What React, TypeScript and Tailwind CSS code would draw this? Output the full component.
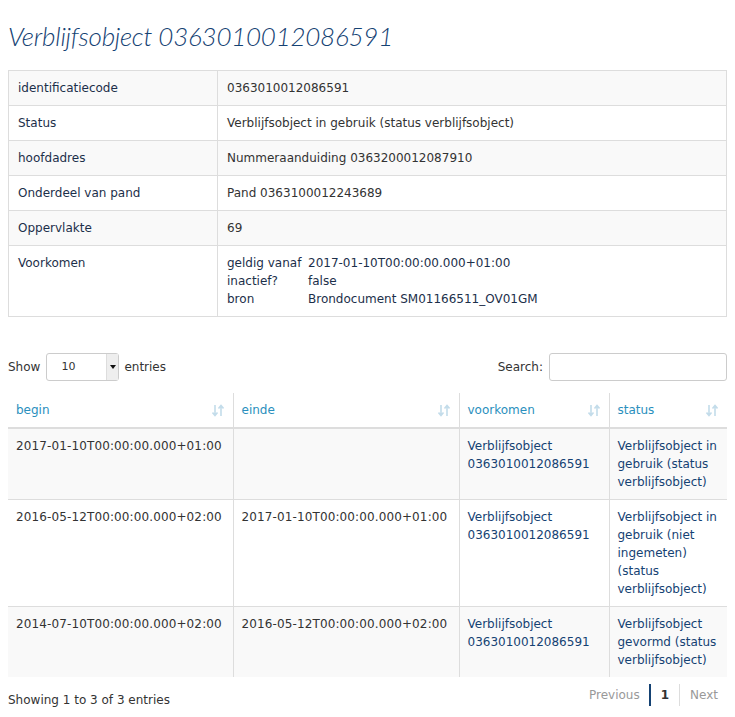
import { FC } from "react";

interface Row {
  begin: string
  einde: string
  voorkomen: string[]
  status: string[]
}

const rows: Row[] = [
  {
    begin: "2017-01-10T00:00:00.000+01:00",
    einde: "",
    voorkomen: ["Verblijfsobject", "0363010012086591"],
    status: ["Verblijfsobject in", "gebruik (status", "verblijfsobject)"],
  },
  {
    begin: "2016-05-12T00:00:00.000+02:00",
    einde: "2017-01-10T00:00:00.000+01:00",
    voorkomen: ["Verblijfsobject", "0363010012086591"],
    status: ["Verblijfsobject in", "gebruik (niet", "ingemeten)", "(status", "verblijfsobject)"],
  },
  {
    begin: "2014-07-10T00:00:00.000+02:00",
    einde: "2016-05-12T00:00:00.000+02:00",
    voorkomen: ["Verblijfsobject", "0363010012086591"],
    status: ["Verblijfsobject", "gevormd (status", "verblijfsobject)"],
  },
];

const props: [string, string][] = [
  ["identificatiecode", "0363010012086591"],
  ["Status", "Verblijfsobject in gebruik (status verblijfsobject)"],
  ["hoofdadres", "Nummeraanduiding 0363200012087910"],
  ["Onderdeel van pand", "Pand 0363100012243689"],
  ["Oppervlakte", "69"],
];

const SortIcon: FC = () => (
  <svg width="12" height="13" viewBox="0 0 12 13" className="text-[#c3dcea]">
    <path d="M3 1v10M0.5 8.5L3 11.5L5.5 8.5" stroke="currentColor" strokeWidth="1.6" fill="none" />
    <path d="M9 12V2M6.5 4.5L9 1.5L11.5 4.5" stroke="currentColor" strokeWidth="1.6" fill="none" />
  </svg>
);

const App: FC = () => {
  return (
    <div className="px-2 pb-2 text-[12px] leading-[18px] text-[#333]" style={{ fontFamily: "'DejaVu Sans', sans-serif" }}>
      <h1 className="pt-[19px] pb-[17px] text-[26px] leading-[34px] italic font-light tracking-[-0.01em] text-[#154273]" style={{ fontFamily: "Lato, sans-serif" }}>
        Verblijfsobject 0363010012086591
      </h1>

      <table className="w-full border-collapse border border-[#ddd]">
        <tbody>
          {props.map(([k, v], i) => (
            <tr key={k} className={i % 2 === 0 ? "bg-[#f9f9f9]" : "bg-white"}>
              <td className="h-[35px] w-[209px] border border-[#ddd] px-[9px] py-[8px] text-[#1c2f4a]">{k}</td>
              <td className="border border-[#ddd] px-[9px] py-[8px]">{v}</td>
            </tr>
          ))}
          <tr className="bg-white">
            <td className="border border-[#ddd] px-[9px] py-[8px] align-top text-[#1c2f4a]">Voorkomen</td>
            <td className="border border-[#ddd] px-[9px] py-[8px]">
              <div className="grid grid-cols-[81px_1fr] text-[#1c2f4a]">
                <span>geldig vanaf</span><span>2017-01-10T00:00:00.000+01:00</span>
                <span>inactief?</span><span>false</span>
                <span>bron</span><span>Brondocument SM01166511_OV01GM</span>
              </div>
            </td>
          </tr>
        </tbody>
      </table>

      <div className="mt-[36px] flex items-center justify-between">
        <div className="flex items-center gap-[5px]">
          <span>Show</span>
          <div className="relative ml-[1px] flex h-[28px] w-[73px] items-center rounded-[3px] border border-[#ccc] bg-white pl-[14px]">
            <span className="text-[11px]">10</span>
            <div className="absolute right-0 top-0 flex h-full w-[12px] items-center justify-center border-l border-[#ddd] bg-[#eee]">
              <div className="h-0 w-0 border-x-[3px] border-t-[4px] border-x-transparent border-t-[#111]" />
            </div>
          </div>
          <span>entries</span>
        </div>
        <div className="flex items-center gap-[6px]">
          <span>Search:</span>
          <div className="h-[28px] w-[178px] rounded-[3px] border border-[#ccc] bg-white" />
        </div>
      </div>

      <table className="mt-[12px] w-full table-fixed border-collapse">
        <colgroup>
          <col className="w-[225px]" />
          <col className="w-[226px]" />
          <col className="w-[150px]" />
          <col />
        </colgroup>
        <thead>
          <tr className="text-[#2a8fbd]">
            {["begin", "einde", "voorkomen", "status"].map((h, i) => (
              <th
                key={h}
                className={`h-[35px] border-b-2 border-[#ddd] px-[8px] text-left font-normal ${i > 0 ? "border-l border-l-[#ddd]" : ""}`}
              >
                <div className="flex items-center justify-between pr-[1px]">
                  <span>{h}</span>
                  <SortIcon />
                </div>
              </th>
            ))}
          </tr>
        </thead>
        <tbody>
          {rows.map((r, i) => (
            <tr key={i} className={i % 2 === 0 ? "bg-[#f9f9f9]" : "bg-white"}>
              <td className="whitespace-nowrap border-t border-[#ddd] px-[8px] py-[8px] align-top tracking-[0.01em]">{r.begin}</td>
              <td className="whitespace-nowrap border-t border-l border-[#ddd] px-[8px] py-[8px] align-top tracking-[0.01em]">{r.einde}</td>
              <td className="whitespace-nowrap border-t border-l border-[#ddd] px-[8px] py-[8px] align-top text-[#154273]">
                {r.voorkomen.map((l) => <div key={l}>{l}</div>)}
              </td>
              <td className="whitespace-nowrap border-t border-l border-[#ddd] px-[8px] py-[8px] align-top text-[#154273]">
                {r.status.map((l) => <div key={l}>{l}</div>)}
              </td>
            </tr>
          ))}
        </tbody>
      </table>

      <div className="mt-[7px] flex items-center justify-between">
        <span className="pt-[4px]">Showing 1 to 3 of 3 entries</span>
        <div className="mb-[6px] flex items-center pr-[9px] text-[#999]">
          <span className="pr-[9px]">Previous</span>
          <span className="border-l-2 border-[#154273] px-[10px] py-[2px] font-bold text-[#333]">1</span>
          <span className="border-l border-[#ddd] py-[2px] pl-[10px]">Next</span>
        </div>
      </div>
    </div>
  );
};

export default App;
